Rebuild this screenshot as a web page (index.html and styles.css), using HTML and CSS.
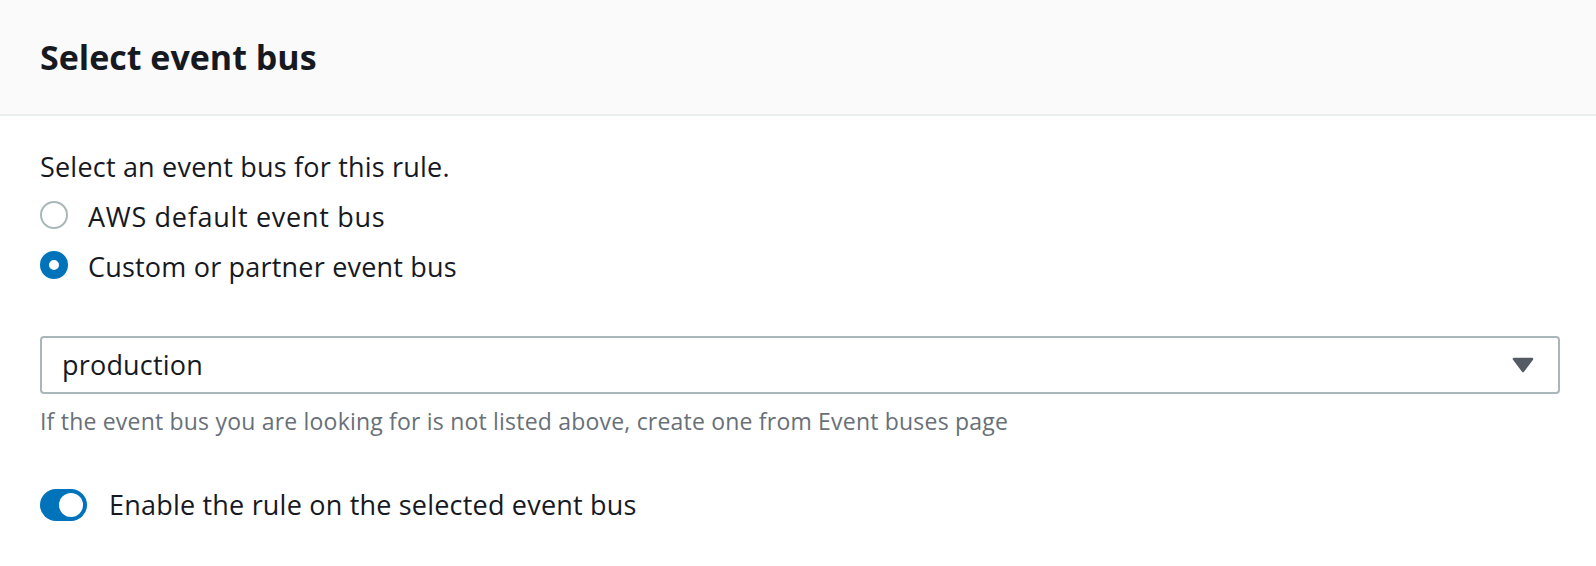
FILE: index.html
```html
<!DOCTYPE html>
<html lang="en">
<head>
<meta charset="utf-8">
<title>Select event bus</title>
<link rel="stylesheet" href="styles.css">
</head>
<body>
<section class="panel">
  <header class="panel-header">
    <h2 class="panel-title">Select event bus</h2>
  </header>
  <div class="panel-body">
    <div class="field">
      <div class="field-label">Select an event bus for this rule.</div>
      <label class="radio">
        <span class="radio-control"></span>
        <span class="radio-label radio-label-wide">AWS default event bus</span>
      </label>
      <label class="radio">
        <span class="radio-control is-checked"></span>
        <span class="radio-label">Custom or partner event bus</span>
      </label>
    </div>
    <div class="select-field">
      <div class="select">
        <span class="select-value">production</span>
        <svg class="select-caret" width="22" height="16" viewBox="0 0 22 16" aria-hidden="true">
          <polygon points="2,2 20,2 11,14" fill="#545b64" stroke="#545b64" stroke-width="2.5" stroke-linejoin="round"/>
        </svg>
      </div>
      <div class="hint">If the event bus you are looking for is not listed above, create one from Event buses page</div>
    </div>
    <label class="toggle-row">
      <span class="toggle"><span class="toggle-knob"></span></span>
      <span class="toggle-label">Enable the rule on the selected event bus</span>
    </label>
  </div>
</section>
</body>
</html>
```
FILE: styles.css
```css
* {
  box-sizing: border-box;
}

html, body {
  margin: 0;
  padding: 0;
  background: #ffffff;
}

body {
  font-family: "Open Sans", "Noto Sans", "Liberation Sans", sans-serif;
  color: #16191f;
  font-size: 27px;
  letter-spacing: 0.2px;
  line-height: 36px;
}

.panel {
  width: 100%;
}

.panel-header {
  height: 116px;
  background: #fafafa;
  border-bottom: 2px solid #eaeded;
  padding: 0 36px 0 40px;
  display: flex;
  align-items: center;
}

.panel-title {
  margin: 0;
  font-size: 34px;
  line-height: 40px;
  font-weight: 700;
  letter-spacing: 0;
  color: #16191f;
}

.panel-body {
  padding: 26px 36px 0 40px;
}

.field {
  display: flex;
  flex-direction: column;
}

.field-label {
  line-height: 50px;
}

.radio {
  display: flex;
  align-items: center;
  gap: 20px;
  line-height: 50px;
}

.radio-label-wide {
  letter-spacing: 0.7px;
}

.radio-control {
  width: 28px;
  height: 28px;
  border-radius: 50%;
  border: 2.5px solid #aab7b8;
  background: #ffffff;
  flex: none;
  margin-bottom: 4px;
}

.radio-control.is-checked {
  border: 9px solid #0073bb;
}

.select-field {
  margin-top: 44px;
}

.select {
  height: 58px;
  border: 2px solid #aab7b8;
  border-radius: 4px;
  display: flex;
  align-items: center;
  justify-content: space-between;
  padding: 0 24px 0 20px;
}

.select-value {
  color: #16191f;
}

.select-caret {
  display: block;
}

.hint {
  margin-top: 12px;
  font-size: 23px;
  letter-spacing: 0.2px;
  line-height: 30px;
  color: #687078;
}

.toggle-row {
  margin-top: 51px;
  display: flex;
  align-items: center;
  gap: 22px;
}

.toggle {
  width: 47px;
  height: 32px;
  border-radius: 16px;
  background: #0073bb;
  padding: 4px;
  display: flex;
  justify-content: flex-end;
  flex: none;
}

.toggle-knob {
  width: 24px;
  height: 24px;
  border-radius: 50%;
  background: #ffffff;
}
```
